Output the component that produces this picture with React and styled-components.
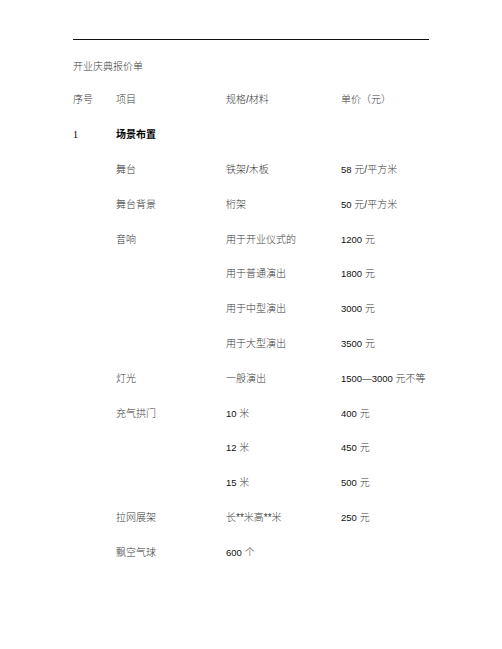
import React from "react";
import styled, { createGlobalStyle } from "styled-components";

const Global = createGlobalStyle`
  html, body { margin: 0; padding: 0; background: #fff; }
  body { font-family: "Liberation Serif", "Noto Sans CJK SC", serif; }
`;

const Page = styled.div`
  width: 502px;
  height: 649px;
  box-sizing: border-box;
  padding: 39px 73px 0 73px;
  background: #fff;
`;

const Rule = styled.div`
  height: 1px;
  background: #111;
  margin-bottom: 8px;
`;

const Title = styled.div`
  height: 35px;
  line-height: 35px;
  font-size: 10px;
  color: #3a3a3a;
  font-family: "Noto Sans CJK SC", sans-serif;
  font-weight: 300;
`;

const Table = styled.div`
  display: flex;
  flex-direction: column;
`;

const Row = styled.div`
  display: grid;
  grid-template-columns: 43px 110px 115px 1fr;
  height: 34.8px;
  align-items: center;
`;

const Cell = styled.div`
  font-size: 10px;
  line-height: 12px;
  white-space: nowrap;
  color: ${(p) => (p.$bold ? "#000" : "#3a3a3a")};
  font-weight: ${(p) => (p.$bold ? 700 : 300)};
  font-family: ${(p) =>
    p.$serifNum
      ? '"Liberation Serif", "Noto Sans CJK SC", serif'
      : '"Liberation Sans", "Noto Sans CJK SC", sans-serif'};
`;

const Num = styled.span`
  font-family: "Liberation Sans", sans-serif;
  color: #111;
  font-weight: 400;
  font-size: 9.5px;
`;

const Index = styled.span`
  color: #000;
`;

const rows = [
  ["序号", "项目", "规格/材料", "单价（元）", "head"],
  ["1", "场景布置", "", "", "section"],
  ["", "舞台", "铁架/木板", [["58"], " 元/平方米"]],
  ["", "舞台背景", "桁架", [["50"], " 元/平方米"]],
  ["", "音响", "用于开业仪式的", [["1200"], " 元"]],
  ["", "", "用于普通演出", [["1800"], " 元"]],
  ["", "", "用于中型演出", [["3000"], " 元"]],
  ["", "", "用于大型演出", [["3500"], " 元"]],
  ["", "灯光", "一般演出", [["1500—3000"], " 元不等"]],
  ["", "充气拱门", [["10"], " 米"], [["400"], " 元"]],
  ["", "", [["12"], " 米"], [["450"], " 元"]],
  ["", "", [["15"], " 米"], [["500"], " 元"]],
  ["", "拉网展架", "长**米高**米", [["250"], " 元"]],
  ["", "飘空气球", [["600"], " 个"], ""],
];

function render(v) {
  if (Array.isArray(v)) {
    return v.map((part, i) =>
      Array.isArray(part) ? <Num key={i}>{part[0]}</Num> : <span key={i}>{part}</span>
    );
  }
  return v;
}

export default function App() {
  return (
    <>
      <Global />
      <Page>
        <Rule />
        <Title>开业庆典报价单</Title>
        <Table>
          {rows.map((r, i) => (
            <Row key={i}>
              <Cell $serifNum>{r[0] === "1" ? <Index>1</Index> : r[0]}</Cell>
              <Cell $bold={r[4] === "section"}>{render(r[1])}</Cell>
              <Cell>{render(r[2])}</Cell>
              <Cell>{render(r[3])}</Cell>
            </Row>
          ))}
        </Table>
      </Page>
    </>
  );
}
